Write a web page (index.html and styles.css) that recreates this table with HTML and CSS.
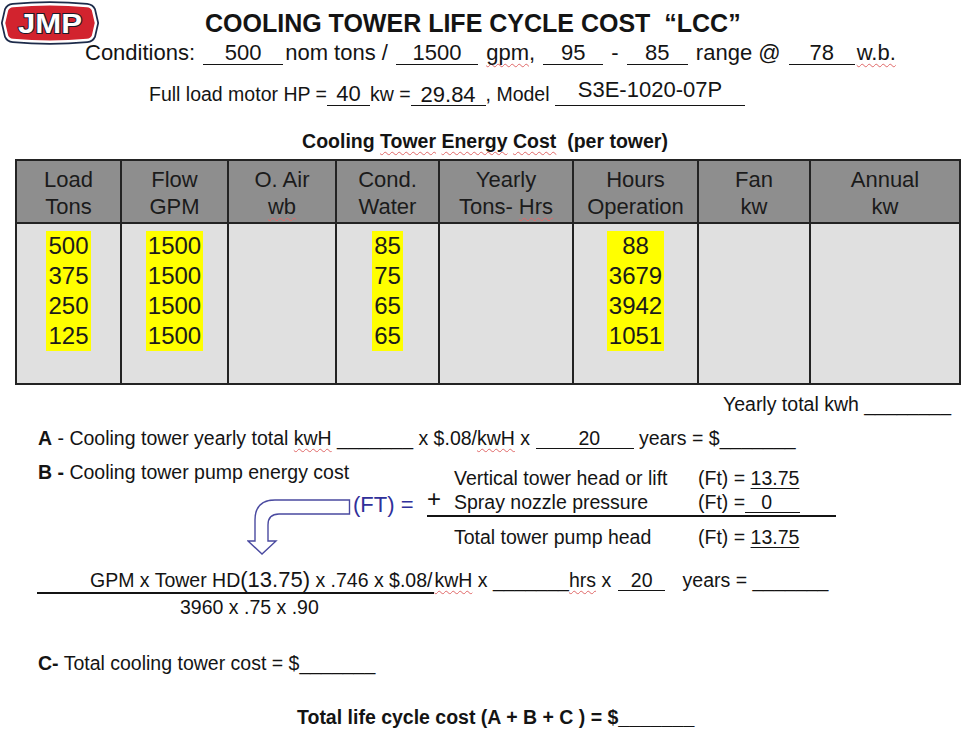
FILE: index.html
```html
<!DOCTYPE html>
<html lang="en">
<head>
<meta charset="utf-8">
<title>Cooling Tower Life Cycle Cost</title>
<link rel="stylesheet" href="styles.css">
</head>
<body>
<div class="page">
  <header class="top">
    <svg class="logo" width="100" height="46" viewBox="0 0 100 46" aria-label="JMP">
      <path d="M13 6 Q50 2.5 87 6 Q91.5 6.5 93 10 L96 23 L93 36 Q91.5 39.5 87 40 Q50 43.5 13 40 Q8.5 39.5 7 36 L4 23 L7 10 Q8.5 6.5 13 6 Z" fill="none" stroke="#1d2b4a" stroke-width="6"/>
      <path d="M13 6 Q50 2.5 87 6 Q91.5 6.5 93 10 L96 23 L93 36 Q91.5 39.5 87 40 Q50 43.5 13 40 Q8.5 39.5 7 36 L4 23 L7 10 Q8.5 6.5 13 6 Z" fill="#d2232e" stroke="#ffffff" stroke-width="2.5"/>
      <text x="50" y="32.5" text-anchor="middle" font-family="Liberation Sans, Arial, sans-serif" font-weight="700" font-size="27" textLength="64" lengthAdjust="spacingAndGlyphs" fill="#ffffff" stroke="#1a1a2a" stroke-width="2" paint-order="stroke">JMP</text>
    </svg>
    <h1 class="title">COOLING TOWER LIFE CYCLE COST&nbsp; “LCC”</h1>
  </header>

  <p class="cond">Conditions: <span class="blank c1">500</span>nom tons / <span class="blank c2">1500</span> <span class="sp">gpm</span>, <span class="blank c3">95</span> - <span class="blank c4">85</span> range @ <span class="blank c5">78</span><span class="sp">w.b.</span></p>

  <p class="motor">Full load motor HP =<span class="blank m1">40</span>kw =<span class="blank m2"><span class="low">29.84</span></span>, Model <span class="blank m3"><span class="raise">S3E-1020-07P</span></span></p>

  <h2 class="heading">Cooling <span class="sp">Tower</span> <span class="sp">Energy</span> <span class="sp">Cost</span>&nbsp; (per tower)</h2>

  <table class="energy">
    <colgroup>
      <col style="width:105px"><col style="width:107px"><col style="width:108px"><col style="width:103px">
      <col style="width:134px"><col style="width:125px"><col style="width:112px"><col style="width:150px">
    </colgroup>
    <thead>
      <tr>
        <th>Load<br>Tons</th>
        <th>Flow<br>GPM</th>
        <th>O. Air<br><span class="sp">wb</span></th>
        <th>Cond.<br>Water</th>
        <th>Yearly<br>Tons- <span class="sp">Hrs</span></th>
        <th>Hours<br>Operation</th>
        <th>Fan<br>kw</th>
        <th>Annual<br>kw</th>
      </tr>
    </thead>
    <tbody>
      <tr>
        <td><div class="hl"><span>500</span><span>375</span><span>250</span><span>125</span></div></td>
        <td><div class="hl"><span>1500</span><span>1500</span><span>1500</span><span>1500</span></div></td>
        <td></td>
        <td><div class="hl"><span>85</span><span>75</span><span>65</span><span>65</span></div></td>
        <td></td>
        <td><div class="hl"><span>88</span><span>3679</span><span>3942</span><span>1051</span></div></td>
        <td></td>
        <td></td>
      </tr>
    </tbody>
  </table>

  <p class="yearly">Yearly total kwh ________</p>

  <p class="line a"><b>A</b> - Cooling tower yearly total <span class="sp">kwH</span> _______ x $.08/<span class="sp">kwH</span> x <span class="blank b20">20</span> years = $_______</p>

  <div class="bsec">
    <div class="bleft">
      <p class="bline"><b>B -</b> Cooling tower pump energy cost</p>
      <div class="ftrow">
        <svg class="arrow" width="104" height="60" viewBox="0 0 104 60" aria-hidden="true">
          <path d="M102.5 3 L28 3 Q8 3 8 23 L8 44 L1 44 L15 57 L29 44 L21 44 L21 28 Q21 17 32 17 L102.5 17 Z" fill="#ffffff" stroke="#4a4aa0" stroke-width="1.4" stroke-linejoin="miter"/>
        </svg>
        <span class="ft">(FT) =</span>
      </div>
    </div>
    <div class="bright">
      <div class="hrow"><span class="op"></span><span>Vertical tower head or lift</span><span>(Ft) = <span class="u">13.75</span></span></div>
      <div class="hrow sum"><span class="op">+</span><span>Spray nozzle pressure</span><span>(Ft) =<span class="blank zero">0</span></span></div>
      <div class="hrow"><span class="op"></span><span>Total tower pump head</span><span>(Ft) = <span class="u">13.75</span></span></div>
    </div>
  </div>

  <div class="gpm">
    <p class="numline"><span class="numer">GPM x Tower HD<span class="big">(13.75)</span> x .746 x $.08/</span><span class="sp">kwH</span> x _______<span class="sp">hrs</span> x<span class="blank y20">20</span> years = _______</p>
    <p class="denom">3960 x .75 x .90</p>
  </div>

  <p class="line cline"><b>C-</b> Total cooling tower cost = $_______</p>

  <p class="line total">Total life cycle cost (A + B + C ) = $_______</p>
</div>
</body>
</html>
```

FILE: styles.css
```css
* { box-sizing: border-box; }

body {
  margin: 0;
  background: #ffffff;
  font-family: "Liberation Sans", Arial, Helvetica, sans-serif;
  color: #141414;
}

.page {
  width: 976px;
  height: 733px;
  overflow: hidden;
}

/* header */
.top {
  display: flex;
  align-items: flex-start;
  height: 40px;
}
.logo { display: block; flex: none; margin-top: 0; }
.title {
  margin: 9px 0 0 105px;
  font-size: 25px;
  line-height: 28px;
  font-weight: 700;
  white-space: nowrap;
}

/* fill-in blanks */
.blank {
  display: inline-block;
  line-height: 1;
  border-bottom: 1.5px solid #141414;
  text-align: center;
}

.sp {
  text-decoration: underline wavy #e06868;
  text-decoration-thickness: 1px;
  text-underline-offset: 3px;
  text-decoration-skip-ink: none;
}
.u {
  text-decoration: underline;
  text-decoration-thickness: 1.4px;
  text-underline-offset: 3px;
}

.cond {
  margin: 0;
  padding-left: 85px;
  font-size: 22px;
  line-height: 26px;
  white-space: nowrap;
}
.cond .blank { margin: 0 2px; }
.c1 { width: 80px; }
.c2 { width: 82px; }
.c3 { width: 60px; }
.c4 { width: 61px; }
.c5 { width: 66px; }

.motor {
  margin: 16px 0 0;
  padding-left: 149px;
  font-size: 19.5px;
  line-height: 24px;
  white-space: nowrap;
}
.motor .blank { font-size: 22px; }
.m1 { width: 43px; }
.m2 { width: 75px; }
.m3 { width: 190px; }
.raise { display: inline-block; transform: translateY(-4px); }
.low { display: inline-block; transform: translateY(1px); }

.heading {
  margin: 22.5px 0 0;
  padding-right: 6px;
  font-size: 19.5px;
  line-height: 24px;
  font-weight: 700;
  text-align: center;
}

/* table */
.energy {
  margin: 6.5px 0 0 15px;
  width: 944px;
  border-collapse: collapse;
  table-layout: fixed;
}
.energy th,
.energy td {
  border: 2px solid #232323;
  text-align: center;
}
.energy th {
  background: #8e8e8e;
  color: #1b1b1b;
  font-weight: 400;
  font-size: 22px;
  line-height: 27px;
  height: 63px;
  padding: 2px 4px 0;
  vertical-align: middle;
}
.energy td {
  background: #e0e0e0;
  height: 161px;
  padding: 7px 0 0;
  vertical-align: top;
  font-size: 24px;
  color: #1b1b1b;
}
.hl {
  display: inline-block;
  background: #ffff00;
}
.hl span {
  display: block;
  height: 30px;
  line-height: 30px;
  padding: 0 2px;
}

/* text lines */
.yearly {
  margin: 6.5px 0 0;
  padding-right: 25px;
  text-align: right;
  font-size: 19.5px;
  line-height: 24px;
}
.line {
  margin: 0;
  padding-left: 38px;
  font-size: 19.5px;
  line-height: 24px;
  white-space: nowrap;
}
.a { margin-top: 10px; }
.b20 {
  width: 98px;
  text-align: left;
  padding-left: 43px;
  border-bottom-width: 1.4px;
}

/* B section */
.bsec {
  display: flex;
  margin-top: 10px;
  padding-left: 38px;
  font-size: 19.5px;
  line-height: 24px;
  white-space: nowrap;
}
.bleft { width: 389px; flex: none; }
.bline { margin: 0; }
.ftrow {
  display: flex;
  align-items: flex-start;
  margin-top: 9.5px;
}
.arrow { display: block; flex: none; margin: 4px 0 0 209px; }
.ft {
  margin-left: 2px;
  font-size: 22px;
  color: #30309a;
}
.bright { width: 409px; flex: none; margin-top: 6px; }
.hrow {
  display: grid;
  grid-template-columns: 27px 244px 1fr;
}
.hrow.sum {
  border-bottom: 2px solid #141414;
  padding-bottom: 1px;
  margin-bottom: 8px;
}
.op {
  font-size: 24px;
  padding-left: 0;
  transform: translateY(-3px);
}
.zero {
  width: 55px;
  text-align: left;
  padding-left: 16px;
  border-bottom-width: 1.4px;
}

/* GPM formula */
.gpm {
  margin-top: 10.5px;
  padding-left: 37px;
  font-size: 19.5px;
  line-height: 24px;
  white-space: nowrap;
}
.numline { margin: 0; }
.numer {
  display: inline-block;
  padding: 0 2px 0 53px;
  border-bottom: 2px solid #141414;
  line-height: 24px;
}
.big { font-size: 22px; line-height: 20px; }
.y20 {
  width: 47px;
  margin: 0 12px 0 7px;
  border-bottom-width: 1.4px;
}
.denom {
  margin: 1px 0 0;
  padding-left: 143px;
}

.cline { margin-top: 32px; }
.total {
  margin-top: 30px;
  padding-left: 297px;
  font-weight: 700;
}
```
